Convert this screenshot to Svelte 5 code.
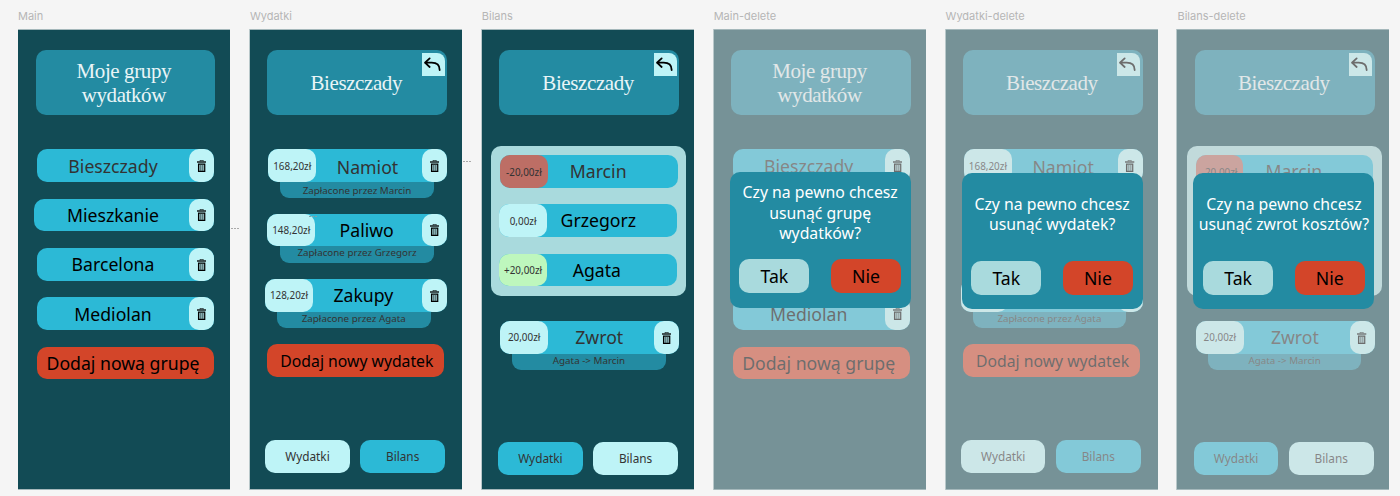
<script>
  const groups = ['Bieszczady', 'Mieszkanie', 'Barcelona', 'Mediolan'];
  const expenses = [
    { name: 'Namiot', amount: '168,20zł', payer: 'Zapłacone przez Marcin', kind: 'first' },
    { name: 'Paliwo', amount: '148,20zł', payer: 'Zapłacone przez Grzegorz', kind: 'second' },
    { name: 'Zakupy', amount: '128,20zł', payer: 'Zapłacone przez Agata', kind: 'third' }
  ];
  const balances = [
    { name: 'Marcin', amount: '-20,00zł', kind: 'debt' },
    { name: 'Grzegorz', amount: '0,00zł', kind: 'even' },
    { name: 'Agata', amount: '+20,00zł', kind: 'credit' }
  ];
  const frames = [
    { title: 'Main', view: 'main' },
    { title: 'Wydatki', view: 'expenses' },
    { title: 'Bilans', view: 'balance' },
    { title: 'Main-delete', view: 'main', ask: ['Czy na pewno chcesz', 'usunąć grupę', 'wydatków?'] },
    { title: 'Wydatki-delete', view: 'expenses', ask: ['Czy na pewno chcesz', 'usunąć wydatek?'] },
    { title: 'Bilans-delete', view: 'balance', ask: ['Czy na pewno chcesz', 'usunąć zwrot kosztów?'] }
  ];
</script>

{#snippet trash()}
  <span class="trash">
    <svg viewBox="0 0 28 37" width="9.3" height="12.3">
      <path d="M9 4V1.2H19V4" fill="none" stroke="#000" stroke-width="2" />
      <path d="M0 4H28V8H0Z" fill="#000" />
      <path d="M4.7 12.5H23.3V34.5H4.7Z" fill="#8fb7ba" stroke="#000" stroke-width="3.6" />
      <path d="M11 13V33M17 13V33" stroke="#2c4446" stroke-width="1.8" />
    </svg>
  </span>
{/snippet}

{#snippet header()}
  <header>
    <h1>Bieszczady</h1>
    <span class="back">
      <svg viewBox="0 0 69 69" width="23" height="23">
        <path d="M23 16L9 29L23 42M9 29H29Q53 29 53 51" fill="none" stroke="#000" stroke-width="5.4" stroke-linecap="round" stroke-linejoin="round" />
      </svg>
    </span>
  </header>
{/snippet}

{#snippet tabs()}
  <nav>
    <span class="tab first-tab">Wydatki</span>
    <span class="tab second-tab">Bilans</span>
  </nav>
{/snippet}

<main>
  {#each frames as f, i}
    <section>
      <h2>{f.title}</h2>
      <div class="frame {f.view}" class:edged={i > 0}>
        {#if f.view === 'main'}
          <header><h1>Moje grupy<br />wydatków</h1></header>
          <div class="groups">
            {#each groups as g, n}
              <div class="row" class:wide={n === 1} class:soft={n === 0}>
                <span class="name">{g}</span>{@render trash()}
              </div>
            {/each}
            <div class="add">Dodaj nową grupę</div>
          </div>
        {:else if f.view === 'expenses'}
          {@render header()}
          <div class="expenses-list">
            {#each expenses as e, n}
              <div class="entry {e.kind}">
                <div class="row" class:soft={n === 0}>
                  <span class="amount">{e.amount}</span><span class="name">{e.name}</span>{@render trash()}
                </div>
                <div class="payer">{e.payer}</div>
              </div>
            {/each}
            <div class="add">Dodaj nowy wydatek</div>
          </div>
          {@render tabs()}
        {:else}
          {@render header()}
          <div class="panel">
            {#each balances as b, n}
              <div class="row {b.kind}" class:soft={n === 0}>
                <span class="amount">{b.amount}</span><span class="name">{b.name}</span>
              </div>
            {/each}
          </div>
          <div class="entry refund">
            <div class="row soft">
              <span class="amount">20,00zł</span><span class="name">Zwrot</span>{@render trash()}
            </div>
            <div class="payer">Agata -&gt; Marcin</div>
          </div>
          {@render tabs()}
        {/if}
        {#if f.ask}
          <div class="veil"></div>
          <div class="modal">
            <p>{#each f.ask as line}<span>{line}</span>{/each}</p>
            <div class="choices"><span class="yes">Tak</span><span class="no">Nie</span></div>
          </div>
        {/if}
      </div>
      {#if i < 2}<span class="dots dots-{f.view}"></span>{/if}
      {#if i === 1}<span class="dots dots-inner"></span>{/if}
    </section>
  {/each}
</main>

<style>
  :global(body) { margin: 0; background: #f5f5f5; overflow: hidden; }
  main {
    box-sizing: border-box; width: 1400px; height: 496px; padding-left: 18px; overflow: hidden;
    display: grid; grid-template-columns: repeat(6, 231.9px);
    font-family: "Noto Sans", sans-serif; color: #000; background: #f5f5f5;
  }
  section { position: relative; width: 212px; }
  h2 { margin: 0; height: 29px; padding-top: 9px; box-sizing: border-box; font: 400 11px/14px Inter, sans-serif; color: #b5b5b5; white-space: nowrap; }
  .frame {
    position: relative; box-sizing: border-box; width: 212px; height: 461px; padding-top: 20px;
    display: flex; flex-direction: column; background: #124b55;
    border-top: 1px solid #a5b8bb; border-bottom: 1px solid #a5b8bb;
  }
  .edged { box-shadow: -1px 0 #b9c8ca; }
  header {
    position: relative; flex: none; box-sizing: border-box; width: 179.5px; height: 65px; margin-left: 17.6px;
    border-radius: 10px; background: #238ba2; display: flex; align-items: center; justify-content: center;
  }
  h1 { margin: 0; font: 400 21px/24px "Liberation Serif", serif; letter-spacing: -0.4px; color: #e9f5f7; text-align: center; white-space: nowrap; }
  .expenses h1, .balance h1 { padding-right: 2px; }
  .main h1 { padding-right: 3px; }
  .back { position: absolute; top: 3px; right: 2.3px; width: 23px; height: 23px; background: #bef4f7; border-top-right-radius: 8px; }
  svg { display: block; }
  .row { position: relative; display: flex; align-items: center; height: 32.7px; border-radius: 10px; background: #2cb9d6; }
  .name { flex: 1; text-align: center; font-size: 17.67px; line-height: 24px; white-space: nowrap; }
  .soft .name { color: #333; }
  .trash { flex: none; box-sizing: border-box; width: 25px; height: 100%; padding-top: 1px; border-radius: 10px; background: #bef4f7; display: flex; align-items: center; justify-content: center; }
  .amount { flex: none; width: 47.7px; height: 100%; border-radius: 10px; background: #bef4f7; display: flex; align-items: center; justify-content: center; font-size: 9.9px; color: #333; }
  .groups { display: flex; flex-direction: column; gap: 16.7px; margin: 34.3px 16px 0 19px; }
  .wide { margin-left: -2.7px; }
  .wide .name { padding-left: 2.7px; }
  .add { height: 32.7px; border-radius: 10px; background: #d34529; display: flex; align-items: center; justify-content: center; font-size: 17.67px; white-space: nowrap; }
  .groups .add { padding-right: 5px; }
  .groups .add { padding-right: 0; text-indent: -5px; }
  .expenses-list { display: flex; flex-direction: column; margin: 34.3px 15px 0 17.5px; }
  .entry { flex: none; height: 48.5px; margin-bottom: 15.8px; }
  .entry .row { z-index: 1; }
  .first { margin-left: 1px; }
  .first .name { padding-right: 3px; padding-top: 2px; }
  .second .name { padding-right: 3.6px; }
  .third .name { padding-right: 8px; }
  .third { margin: 1px 0 16.8px -2.3px; }
  .payer {
    box-sizing: border-box; width: 153.7px; height: 16.3px; margin-left: 11.8px; border-radius: 0 0 9px 9px;
    background: #238ba2; color: #333; font-size: 9.8px; line-height: 18px; text-align: center; white-space: nowrap;
  }
  .second .payer { margin-left: 12.8px; line-height: 13px; }
  .third .payer { line-height: 14px; }
  .refund .payer { line-height: 14.5px; }
  .expenses .add { width: 177px; font-size: 15.75px; box-sizing: border-box; padding-left: 2px; }
  nav { display: flex; gap: 10.6px; margin: auto 0 16px 15.3px; }
  .tab { box-sizing: border-box; width: 84.6px; height: 32.7px; padding-bottom: 1px; border-radius: 10px; background: #2cb9d6; color: #333; display: flex; align-items: center; justify-content: center; font-size: 11.8px; }
  .expenses .first-tab, .balance .second-tab { background: #bef4f7; }
  .balance nav { margin: auto 0 14px 16.3px; }
  .panel {
    box-sizing: border-box; width: 195px; height: 150px; margin: 31px 0 0 9.2px; padding: 9.3px 8.5px 0 8.3px;
    border-radius: 10px; background: #a9dadd; display: flex; flex-direction: column; gap: 16.5px;
  }
  .panel .row { width: 177.5px; }
  .panel .name { padding-right: 27px; padding-bottom: 1px; }
  .panel .debt { margin-left: 0.8px; }
  .panel .debt .name { padding-right: 29px; }
  .panel .credit .name { padding-right: 30px; }
  .debt .amount { background: #bd6e65; }
  .credit .amount { background: #bef7bd; }
  .refund { width: 178.7px; margin: 25px 0 0 18.5px; }
  .refund .name { padding-right: 3.5px; }
  .veil { position: absolute; z-index: 2; inset: 0; background: rgba(217, 217, 217, 0.5); }
  .modal {
    position: absolute; z-index: 3; top: 143.3px; left: 16px; box-sizing: border-box; width: 181px; height: 136px;
    padding: 20.4px 9.7px 14.3px; border-radius: 10px; background: #238ba2; display: flex; flex-direction: column; justify-content: space-between;
  }
  .main .modal { top: 141.7px; padding-top: 10.5px; }
  p { margin: 0 -9px; color: #fff; font-size: 15.8px; line-height: 20.6px; text-align: center; }
  p span { display: block; white-space: nowrap; }
  .choices { display: flex; justify-content: space-between; }
  .yes, .no { width: 70px; height: 34px; border-radius: 10px; background: #a9dadd; display: flex; align-items: center; justify-content: center; font-size: 17.67px; }
  .no { background: #d34529; }
  .dots { position: absolute; z-index: 4; width: 8px; height: 1px; background: repeating-linear-gradient(90deg, #a9a9a9 0 2px, transparent 2px 3px); }
  .dots-main { left: 213px; top: 228px; }
  .dots-expenses { left: 213px; top: 161px; }
  .dots-inner { left: 59px; top: 216px; background: repeating-linear-gradient(90deg, #7fa3a8 0 2px, transparent 2px 3px); }
</style>
